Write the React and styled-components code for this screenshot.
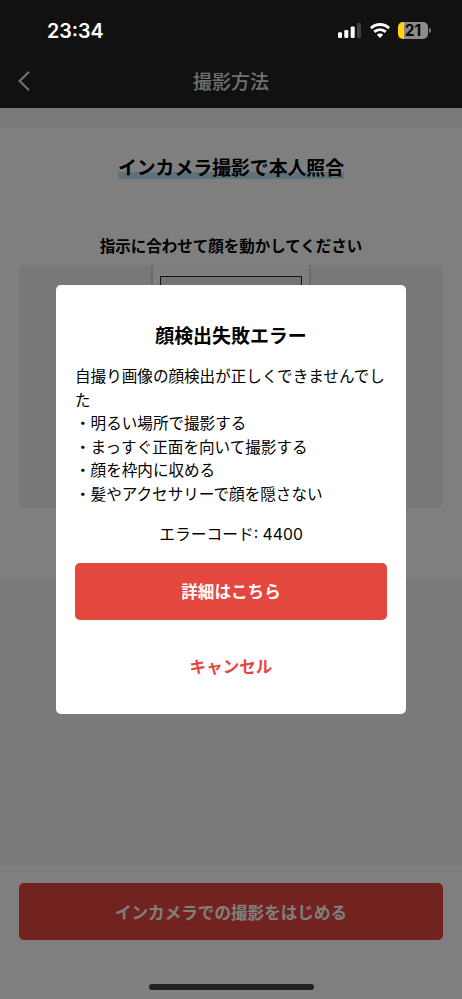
import React from 'react'
import styled, { createGlobalStyle } from 'styled-components'

const colors = {
  red: '#e4473e',
  white: '#fff',
  black: '#000',
  page: '#f4f4f8',
  panel: '#f0f0f0',
  header: '#232323',
}

const GlobalStyle = createGlobalStyle`
  * { box-sizing: border-box; }
  body {
    margin: 0;
    font-family: Inter, "Noto Sans CJK JP", sans-serif;
    color: ${colors.black};
    background: ${colors.page};
  }
  h1, h2, p, ul { margin: 0; padding: 0; }
  button { font-family: inherit; }
`

const Signal = () => (
  <svg width="23" height="15" viewBox="0 0 23 15">
    <rect x="0" y="9.2" width="4" height="5.8" rx="1.2" fill="#fff" />
    <rect x="6.3" y="7" width="4" height="8" rx="1.2" fill="#fff" />
    <rect x="12.7" y="3.4" width="4" height="11.6" rx="1.2" fill="#fff" />
    <rect x="19" y="0" width="4" height="15" rx="1.2" fill="#404040" />
  </svg>
)

const Wifi = () => (
  <svg width="20" height="15" viewBox="0 0 20 15" fill="none" stroke="#fff" strokeWidth="2.9">
    <path d="M1 5.3 C6 .3 14 .3 19 5.3" />
    <path d="M4.3 8.9 C7.5 5.8 12.5 5.8 15.7 8.9" />
    <path d="M10 15 L6.8 11.8 C8.6 10.1 11.4 10.1 13.2 11.8 Z" fill="#fff" stroke="none" />
  </svg>
)

const App = () => (
  <Screen>
    <GlobalStyle />
    <StatusBar>
      <Time>23:34</Time>
      <StatusIcons>
        <Signal />
        <Wifi />
        <Battery>21</Battery>
      </StatusIcons>
    </StatusBar>

    <Header>
      <svg width="12" height="20" viewBox="0 0 12 20" fill="none" stroke="#e0e0e0" strokeWidth="2.2">
        <path d="M11 .8 L1.6 10 L11 19.2" />
      </svg>
      <h1>撮影方法</h1>
      <span />
    </Header>

    <Content>
      <Heading><span>インカメラ撮影で本人照合</span></Heading>
      <Lead>指示に合わせて顔を動かしてください</Lead>
      <Panel>
        <Phone><PhoneScreen /></Phone>
      </Panel>
    </Content>

    <Footer>
      <Button>インカメラでの撮影をはじめる</Button>
    </Footer>

    <Overlay>
      <Modal>
        <h2>顔検出失敗エラー</h2>
        <Message>
          <p>自撮り画像の顔検出が正しくできませんでした</p>
          <p>・明るい場所で撮影する</p>
          <p>・まっすぐ正面を向いて撮影する</p>
          <p>・顔を枠内に収める</p>
          <p>・髪やアクセサリーで顔を隠さない</p>
        </Message>
        <ErrorCode>エラーコード: 4400</ErrorCode>
        <Button>詳細はこちら</Button>
        <Button plain>キャンセル</Button>
      </Modal>
    </Overlay>
    <HomeIndicator />
  </Screen>
)

export default App

const Screen = styled.div`
  position: relative;
  display: flex;
  flex-direction: column;
  height: 999px;
  overflow: hidden;
`

const StatusBar = styled.div`
  position: relative;
  z-index: 2;
  display: flex;
  justify-content: space-between;
  height: 56px;
  padding: 18px 34px 0 47px;
`

const Time = styled.div`
  color: ${colors.white};
  font-size: 19.7px;
  font-weight: 600;
  line-height: 26px;
`

const StatusIcons = styled.div`
  display: flex;
  align-items: center;
  gap: 8.5px;
  height: 25px;
`

const Battery = styled.div`
  position: relative;
  width: 30px;
  height: 17px;
  border-radius: 5px;
  background: linear-gradient(90deg, #ffd60a 6.5px, #8b8b8b 6.5px);
  color: #080808;
  font-size: 15.5px;
  font-weight: 700;
  line-height: 17px;
  text-align: center;
  &:after {
    content: '';
    position: absolute;
    top: 6px;
    right: -3px;
    width: 2px;
    height: 5px;
    border-radius: 0 3px 3px 0;
    background: #777;
  }
`

const Header = styled.header`
  display: grid;
  grid-template-columns: 40px 1fr 40px;
  align-items: center;
  height: 108px;
  margin-top: -56px;
  padding: 53px 18px 0;
  flex-shrink: 0;
  background: ${colors.header};
  h1 {
    padding-top: 5px;
    color: #e0e0e0;
    font-size: 18.95px;
    font-weight: 500;
    line-height: 28px;
    text-align: center;
  }
`

const Content = styled.main`
  display: flex;
  flex-direction: column;
  height: 451.5px;
  margin-top: 20px;
  padding: 26px 19px 0;
  background: ${colors.white};
`

const Heading = styled.h2`
  height: 28px;
  font-size: 18.85px;
  font-weight: 700;
  line-height: 30px;
  text-align: center;
  span {
    display: inline-block;
    height: 25px;
    background: linear-gradient(transparent 18px, #bfe5f2 18px);
  }
`

const Lead = styled.p`
  margin-top: 53px;
  font-size: 15.5px;
  font-weight: 700;
  line-height: 24px;
  text-align: center;
`

const Panel = styled.div`
  display: flex;
  justify-content: center;
  height: 243px;
  margin-top: 6px;
  border-radius: 5px;
  background: ${colors.panel};
`

const Phone = styled.div`
  width: 160px;
  padding: 11px 7px 0;
  border: solid #d4d4d6;
  border-width: 0 2px;
  background: #fcfcfc;
`

const PhoneScreen = styled.div`
  height: 200px;
  border: 1.5px solid #222;
  background: #eae4e2;
`

const Footer = styled.footer`
  height: 134px;
  margin-top: auto;
  padding: 18px 19px 0;
  background: ${colors.white};
`

const Overlay = styled.div`
  position: absolute;
  inset: 0;
  display: flex;
  justify-content: center;
  align-items: center;
  background: rgba(0, 0, 0, .5);
`

const Modal = styled.div`
  display: flex;
  flex-direction: column;
  width: 350px;
  height: 429px;
  padding: 37px 19px 0;
  border-radius: 5px;
  background: ${colors.white};
  h2 {
    font-size: 18.95px;
    font-weight: 700;
    line-height: 30px;
    text-align: center;
  }
`

const Message = styled.div`
  margin-top: 13px;
  font-size: 15.58px;
  line-height: 23.6px;
`

const ErrorCode = styled.p`
  margin: 15px 0 16px;
  font-size: 15.75px;
  line-height: 25px;
  text-align: center;
`

const Button = styled.button.withConfig({ shouldForwardProp: p => p !== 'plain' })`
  width: 100%;
  height: 57px;
  margin-top: ${props => props.plain ? '18px' : '0'};
  padding: 0;
  border: 0;
  border-radius: 5px;
  background: ${props => props.plain ? 'transparent' : colors.red};
  color: ${props => props.plain ? colors.red : colors.white};
  font-size: 16.58px;
  font-weight: 700;
  flex-shrink: 0;
`

const HomeIndicator = styled.div`
  position: absolute;
  bottom: 9px;
  left: 149px;
  width: 165px;
  height: 6px;
  border-radius: 3px;
  background: #222;
`
